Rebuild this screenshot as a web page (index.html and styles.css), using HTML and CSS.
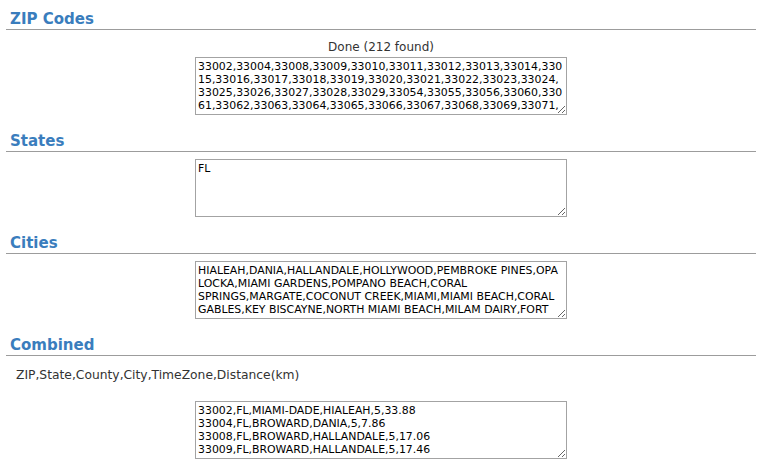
FILE: index.html
```html
<!DOCTYPE html>
<html lang="en">
<head>
    <meta charset="UTF-8">
    <meta name="viewport" content="width=device-width, initial-scale=1.0">
    <title>ZIP Code Radius Results</title>
    <link rel="stylesheet" href="styles.css">
</head>
<body>
    <h2 class="section-title">ZIP Codes</h2>
    <div class="section">
        <div class="status">Done (212 found)</div>
        <textarea class="result-box" id="zips">33002,33004,33008,33009,33010,33011,33012,33013,33014,33015,33016,33017,33018,33019,33020,33021,33022,33023,33024,33025,33026,33027,33028,33029,33054,33055,33056,33060,33061,33062,33063,33064,33065,33066,33067,33068,33069,33071,</textarea>
    </div>

    <h2 class="section-title">States</h2>
    <div class="section">
        <textarea class="result-box" id="states">FL</textarea>
    </div>

    <h2 class="section-title">Cities</h2>
    <div class="section">
        <textarea class="result-box" id="cities">HIALEAH,DANIA,HALLANDALE,HOLLYWOOD,PEMBROKE PINES,OPA LOCKA,MIAMI GARDENS,POMPANO BEACH,CORAL SPRINGS,MARGATE,COCONUT CREEK,MIAMI,MIAMI BEACH,CORAL GABLES,KEY BISCAYNE,NORTH MIAMI BEACH,MILAM DAIRY,FORT LAUDERDALE</textarea>
    </div>

    <h2 class="section-title">Combined</h2>
    <div class="section">
        <div class="columns">ZIP,State,County,City,TimeZone,Distance(km)</div>
        <textarea class="result-box combined" id="combined">33002,FL,MIAMI-DADE,HIALEAH,5,33.88
33004,FL,BROWARD,DANIA,5,7.86
33008,FL,BROWARD,HALLANDALE,5,17.06
33009,FL,BROWARD,HALLANDALE,5,17.46</textarea>
    </div>
</body>
</html>
```

FILE: styles.css
```css
body {
    margin: 0 13px 0 6px;
    font-family: "DejaVu Sans", Verdana, sans-serif;
    color: #333;
    background: white;
}
.section-title {
    margin: 0;
    padding: 0 4px 1px;
    font-size: 15px;
    line-height: 18px;
    font-weight: bold;
    color: #3a7dbd;
    border-bottom: 1px solid #9c9c9c;
}
.section-title:first-child {
    margin-top: 10px;
}
.section {
    padding: 7px 0 17px;
}
.section:last-child {
    padding-top: 8px;
}
.status {
    margin: 2px 0;
    font-size: 12px;
    line-height: 16px;
    text-align: center;
}
.columns {
    margin-top: 3px;
    padding-left: 10px;
    font-size: 12.3px;
    line-height: 16px;
}
.result-box {
    display: block;
    box-sizing: border-box;
    width: 372px;
    height: 58px;
    margin: 0 auto;
    padding: 2px;
    border: 1px solid #a3a3a3;
    font-family: "DejaVu Sans", Verdana, sans-serif;
    font-size: 10.92px;
    line-height: 13px;
    color: black;
    background: white;
    overflow: hidden;
    resize: both;
}
.combined {
    margin-top: 18px;
}
```
